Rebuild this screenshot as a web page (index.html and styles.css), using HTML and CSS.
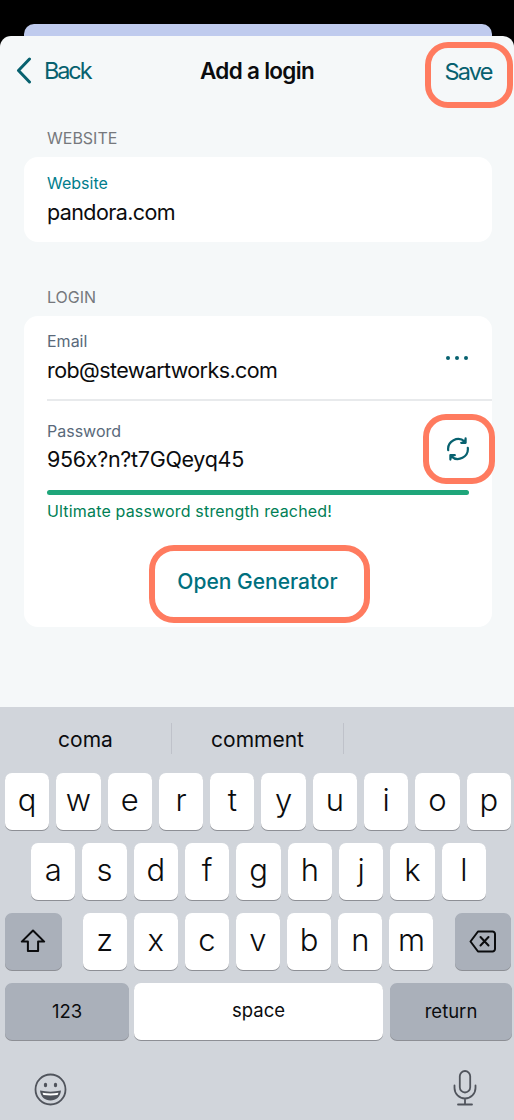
FILE: index.html
```html
<!DOCTYPE html>
<html lang="en">
<head>
<meta charset="utf-8">
<title>Add a login</title>
<link rel="stylesheet" href="styles.css">
</head>
<body>
<div class="screen">
  <div class="backdrop"><div class="under-sheet"></div></div>
  <main class="sheet">
    <header class="nav">
      <div class="back">
        <svg class="chevron" width="16" height="27" viewBox="0 0 16 27"><path d="M13.500 2 2.500 13.500l11 11.500" fill="none" stroke="#07616f" stroke-width="3" stroke-linecap="round" stroke-linejoin="round"/></svg>
        <span>Back</span>
      </div>
      <h1 class="title">Add a login</h1>
      <div class="save"><span>Save</span></div>
    </header>

    <h2 class="section-label website-label">WEBSITE</h2>
    <section class="card website-card">
      <div class="caption focus">Website</div>
      <div class="value">pandora.com</div>
    </section>

    <h2 class="section-label login-label">LOGIN</h2>
    <section class="card login-card">
      <div class="row email-row">
        <div class="field">
          <div class="caption">Email</div>
          <div class="value">rob@stewartworks.com</div>
        </div>
        <div class="dots"><i></i><i></i><i></i></div>
      </div>
      <div class="row password-row">
        <div class="field">
          <div class="caption">Password</div>
          <div class="value secret">956x?n?t7GQeyq45</div>
        </div>
        <div class="refresh">
          <svg width="24" height="24" viewBox="0 0 24 24" fill="none" stroke="#07616f" stroke-width="2.200" stroke-linecap="round" stroke-linejoin="round"><path d="M2.200 13.200A10 10 0 0 1 18.800 4.600"/><path d="M21.800 10.800A10 10 0 0 1 5.200 19.400"/><path d="M19.600 1.400v4.400h-4.400" fill="#07616f"/><path d="M4.400 22.600v-4.400h4.400" fill="#07616f"/></svg>
        </div>
      </div>
      <div class="meter"></div>
      <div class="strength">Ultimate password strength reached!</div>
      <div class="generator-wrap"><div class="generator">Open Generator</div></div>
    </section>
  </main>

  <section class="keyboard">
    <div class="suggestions">
      <div class="suggestion">coma</div>
      <div class="suggestion">comment</div>
      <div class="suggestion"></div>
    </div>
    <div class="keys row-1">
      <div class="key">q</div><div class="key">w</div><div class="key">e</div><div class="key">r</div><div class="key">t</div><div class="key">y</div><div class="key">u</div><div class="key">i</div><div class="key">o</div><div class="key">p</div>
    </div>
    <div class="keys row-2">
      <div class="key">a</div><div class="key">s</div><div class="key">d</div><div class="key">f</div><div class="key">g</div><div class="key">h</div><div class="key">j</div><div class="key">k</div><div class="key">l</div>
    </div>
    <div class="keys row-3">
      <div class="key dark side">
        <svg width="26" height="24" viewBox="0 0 26 24"><path d="M13 1.500 1.800 12.600h6.100v9.400h10.200v-9.400h6.100z" fill="none" stroke="#0b0c0e" stroke-width="2" stroke-linejoin="round"/></svg>
      </div>
      <div class="letters">
        <div class="key">z</div><div class="key">x</div><div class="key">c</div><div class="key">v</div><div class="key">b</div><div class="key">n</div><div class="key">m</div>
      </div>
      <div class="key dark side">
        <svg width="27" height="23" viewBox="0 0 27 23" fill="none" stroke="#0b0c0e" stroke-width="2" stroke-linecap="round" stroke-linejoin="round"><path d="M9 1.500h14.500a2.500 2.500 0 0 1 2.500 2.500v15a2.500 2.500 0 0 1-2.500 2.500H9L1.500 11.500z"/><path d="m11.500 7 8 8.500M19.500 7l-8 8.500"/></svg>
      </div>
    </div>
    <div class="keys row-4">
      <div class="key dark small num">123</div>
      <div class="key small space">space</div>
      <div class="key dark small ret">return</div>
    </div>
    <div class="system">
      <svg class="emoji" width="33" height="33" viewBox="0 0 33 33"><circle cx="16.500" cy="16.500" r="15" fill="none" stroke="#50545c" stroke-width="1.800"/><ellipse cx="11.500" cy="12" rx="1.700" ry="2.300" fill="#50545c"/><ellipse cx="21.500" cy="12" rx="1.700" ry="2.300" fill="#50545c"/><path d="M6 17.500c7 1.500 14 1.500 21 0-.6 6.500-5 10-10.500 10S6.600 24 6 17.500z" fill="#50545c"/><path d="M8.500 19.700c5.300.9 10.700.9 16 0-.3 .9-.6 1.700-1 2.300-4.600.6-9.400.6-14 0-.4-.6-.7-1.400-1-2.300z" fill="#fff"/></svg>
      <svg width="24" height="36" viewBox="0 0 24 36" fill="none" stroke="#50545c" stroke-width="1.800" stroke-linecap="round"><rect x="6.800" y="1" width="10.400" height="21.500" rx="5.200"/><path d="M1.500 15.500v2.500a10.500 10.500 0 0 0 21 0v-2.500M12 28.500v5.500M5 34.500h14"/></svg>
    </div>
  </section>
</div>
</body>
</html>
```
FILE: styles.css
```css
* { box-sizing: border-box; }
html, body { margin: 0; padding: 0; }
body {
  width: 514px;
  height: 1120px;
  overflow: hidden;
  background: #000;
  font-family: Inter, "Liberation Sans", sans-serif;
  color: #0b0c0e;
}
.screen { display: flex; flex-direction: column; height: 1120px; }

.backdrop { height: 36px; padding: 24px 22px 0 24px; background: #000; }
.under-sheet { height: 12px; background: #bfcbee; border-radius: 10px 10px 0 0; }

.sheet {
  height: 671px;
  background: #f5f8f9;
  border-radius: 11px 11px 0 0;
  display: flex;
  flex-direction: column;
}

.nav {
  height: 72px;
  padding: 5px 1px 0 1px;
  display: grid;
  grid-template-columns: minmax(0, 1fr) auto minmax(0, 1fr);
  align-items: center;
}
.back {
  display: flex;
  align-items: center;
  gap: 12px;
  margin-left: 15px;
  padding-bottom: 9px;
  font-size: 23.500px;
  letter-spacing: -2.100px;
  color: #07616f;
}
.chevron { flex: none; }
.title {
  margin: 0;
  padding-bottom: 9px;
  font-size: 22.500px;
  font-weight: 600;
  letter-spacing: -0.700px;
  color: #0b0c0e;
  text-align: center;
}
.save {
  justify-self: end;
  width: 88px;
  height: 66px;
  padding: 0 2px 6px 0;
  border: 6.500px solid #ff7b5f;
  border-radius: 23px;
  display: flex;
  align-items: center;
  justify-content: center;
  font-size: 23.500px;
  letter-spacing: -1.800px;
  color: #07616f;
}

.section-label {
  margin: 0;
  padding-left: 47px;
  font-size: 16px;
  font-weight: 400;
  line-height: 20px;
  color: #76787d;
}
.website-label { margin-top: 20px; height: 29px; }
.login-label { margin-top: 45px; height: 29px; }

.card {
  margin: 0 22px 0 24px;
  background: #fff;
  border-radius: 14px;
}
.website-card { height: 85px; padding: 16px 0 0 23px; }
.login-card { height: 311px; padding-left: 23px; }

.caption { font-size: 16px; line-height: 20px; color: #59697a; }
.caption.focus { color: #007d8c; }
.value { font-size: 21.500px; line-height: 30px; letter-spacing: -0.600px; color: #0b0c0e; margin-top: 4px; }
.value.secret { letter-spacing: -0.300px; margin-top: 3px; }

.row { display: flex; align-items: center; justify-content: space-between; }
.email-row {
  height: 85px;
  padding: 15px 24px 0 0;
  align-items: flex-start;
  border-bottom: 2px solid #e8eaec;
}
.dots { display: flex; gap: 5px; margin-top: 25px; }
.dots i { width: 4px; height: 4px; border-radius: 50%; background: #07616f; }

.password-row { height: 88px; align-items: flex-start; padding-top: 20px; }
.refresh {
  width: 72px;
  height: 70px;
  margin: -7px -3px 0 0;
  padding-right: 2px;
  border: 6.500px solid #ff7b5f;
  border-radius: 23px;
  display: flex;
  align-items: center;
  justify-content: center;
}

.meter { width: 422px; height: 5px; border-radius: 3px; background: #1fa67a; margin-top: 1px; }
.strength { font-size: 16px; line-height: 20px; letter-spacing: 0.170px; color: #008055; margin-top: 6px; }

.generator-wrap { display: flex; justify-content: center; margin: 24px 0 0 -20px; }
.generator {
  flex: none;
  width: 221px;
  height: 78px;
  padding: 0 4px 6px 0;
  border: 6.500px solid #ff7b5f;
  border-radius: 25px;
  display: flex;
  align-items: center;
  justify-content: center;
  font-size: 21px;
  font-weight: 500;
  color: #00707e;
}

.keyboard {
  flex: 1;
  background: #d1d5db;
  display: flex;
  flex-direction: column;
}
.suggestions { height: 66px; padding-top: 16px; display: grid; grid-template-columns: 172px 172px 170px; }
.suggestion {
  height: 31px;
  font-size: 21px;
  line-height: 33px;
  text-align: center;
  color: #0b0c0e;
  border-right: 1px solid #bfc2ca;
}
.suggestion:last-child { border-right: 0; }

.keys { display: flex; height: 56.500px; margin-bottom: 13.500px; }
.row-1 { gap: 7px; padding: 0 3px 0 5px; }
.row-2 { gap: 7px; padding: 0 28px 0 31px; }
.row-3 { justify-content: space-between; padding: 0 3px 0 5px; }
.row-4 { padding: 0 3px 0 5px; gap: 5px; }

.key {
  flex: 1;
  background: #fff;
  border-radius: 7px;
  box-shadow: 0 1px 0 #8d8f95;
  display: flex;
  align-items: center;
  justify-content: center;
  font-size: 31px;
  font-weight: 300;
  padding-bottom: 3px;
  color: #0b0c0e;
}
.key.dark { background: #aab0ba; }
.key.small { font-size: 18.500px; font-weight: 400; padding-bottom: 0; }
.key.space { padding-bottom: 2px; }
.side { flex: 0 0 56.500px; padding-bottom: 0; }
.letters { display: flex; gap: 7px; width: 351px; }
.num { flex: 0 0 124px; }
.space { flex: 0 0 249px; }
.ret { flex: 0 0 122px; margin-left: 2px; }

.system {
  display: flex;
  justify-content: space-between;
  align-items: center;
  padding: 0 37px 0 34px;
  margin-top: 17px;
}
.emoji { margin-top: 2px; }
```
